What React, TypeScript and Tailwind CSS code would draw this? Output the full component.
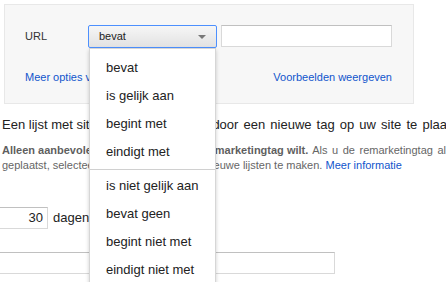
import React from 'react';

const firstGroup = ['bevat', 'is gelijk aan', 'begint met', 'eindigt met'];
const secondGroup = ['is niet gelijk aan', 'bevat geen', 'begint niet met', 'eindigt niet met'];

function OperatorMenu() {
  return (
    <div className="absolute left-[89px] top-[48px] w-[127px] h-[260px] bg-white border border-[#d6d6d6] shadow-[0_2px_4px_rgba(0,0,0,0.2)] pt-[5px] text-[13px] text-[#222]">
      {firstGroup.map((item) => (
        <div key={item} className="h-[28px] flex items-center pl-[16px] whitespace-nowrap">
          {item}
        </div>
      ))}
      <div className="mt-[3px] mb-[2px] h-px bg-[#d0d0d0]" />
      {secondGroup.map((item) => (
        <div key={item} className="h-[28px] flex items-center pl-[16px] whitespace-nowrap">
          {item}
        </div>
      ))}
    </div>
  );
}

export default function App() {
  return (
    <div className="relative w-[446px] h-[282px] overflow-hidden bg-white font-['Liberation_Sans',Arial,sans-serif] text-[#222]">
      <div className="pl-[4px] pt-[4px]">
        <div className="w-[410px] h-[100px] border border-[#e8e8e8] bg-[#f7f7f7] pl-[20px] pt-[20px]">
          <div className="flex items-center h-[23px]">
            <span className="w-[63px] text-[11px] text-[#333]">URL</span>
            <div className="w-[129px] h-[23px] border border-[#4d90fe] rounded-[2px] bg-gradient-to-b from-[#f6f6f6] to-[#e2e2e2] flex items-center justify-between pl-[10px] pr-[10px] text-[11px] text-[#222]">
              <span>bevat</span>
              <span className="w-0 h-0 border-l-[4px] border-r-[4px] border-t-[4px] border-l-transparent border-r-transparent border-t-[#777]" />
            </div>
            <div className="ml-[4px] w-[171px] h-[22px] self-start bg-white border border-[#d9d9d9] border-t-[#c0c0c0]" />
          </div>
          <div className="mt-[22px] w-[367px] flex justify-between text-[11px] text-[#15c] leading-[14px]">
            <span>Meer opties voor regels</span>
            <span>Voorbeelden weergeven</span>
          </div>
        </div>
      </div>

      <p className="mt-[13px] pl-[2px] text-[13px] leading-[16px] whitespace-nowrap text-[#222]">
        Een lijst met sitebezoekers maken
        <span className="ml-[8px] [word-spacing:1.5px]"> door een nieuwe tag op uw site te plaatsen.</span>
      </p>

      <p className="mt-[10px] pl-[2px] text-[11px] leading-[15px] whitespace-nowrap text-[#666]">
        <b className="text-[#5f5f5f]">Alleen aanbevolen als u al een nieuwe remarketingtag wilt.</b>
        <span className="[word-spacing:1.5px]"> Als u de remarketingtag al hebt</span>
        <br />
        geplaatst, selecteert u de optie Regel om nieuwe lijsten te maken.{' '}
        <span className="text-[#15c]">Meer informatie</span>
      </p>

      <div className="mt-[34px] flex items-center">
        <div className="ml-[-12px] w-[60px] h-[22px] bg-white border border-[#d9d9d9] border-t-[#c0c0c0] flex items-center justify-end pr-[4px] text-[13px]">
          30
        </div>
        <span className="ml-[5px] text-[13px]">dagen</span>
      </div>

      <div className="mt-[23px] ml-[-10px] w-[345px] h-[22px] bg-white border border-[#d9d9d9] border-t-[#c0c0c0]" />

      <OperatorMenu />
    </div>
  );
}
